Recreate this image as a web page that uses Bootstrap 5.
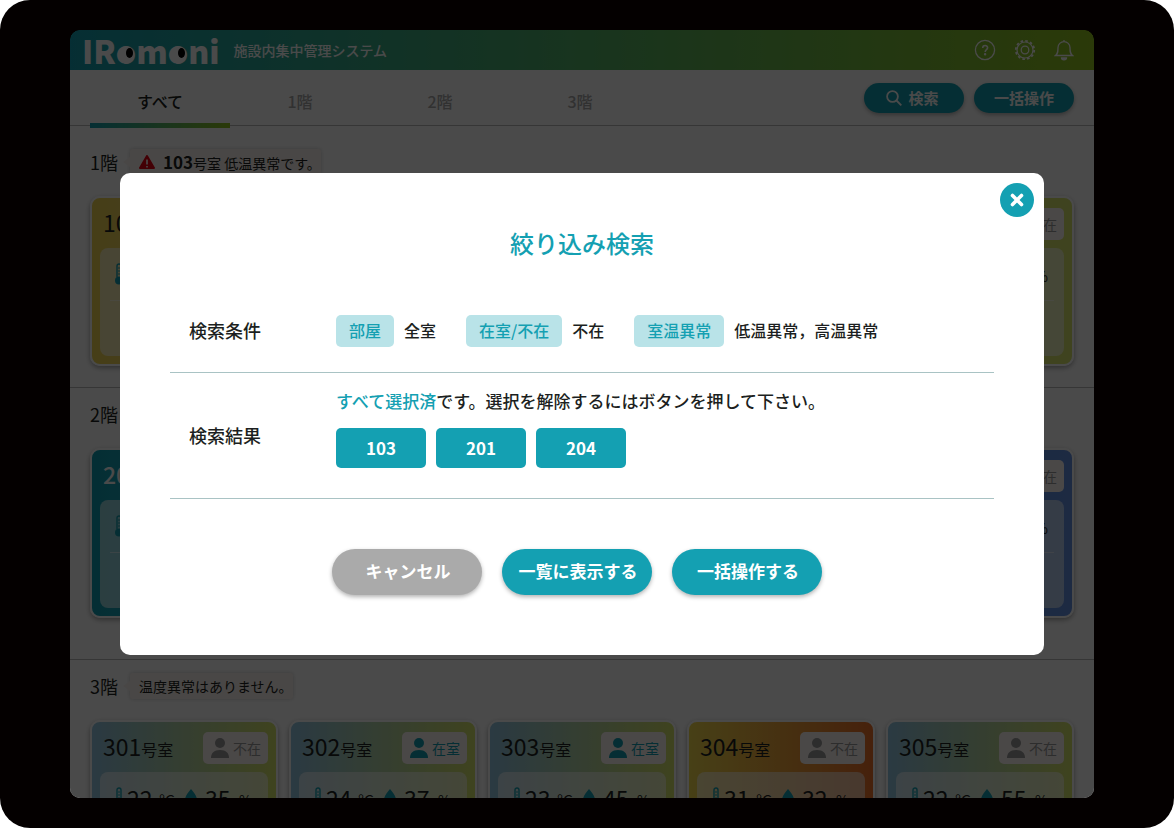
<!DOCTYPE html>
<html lang="ja">
<head>
<meta charset="utf-8">
<meta name="viewport" content="width=device-width, initial-scale=1">
<title>IRomoni 施設内集中管理システム</title>
<link href="https://cdn.jsdelivr.net/npm/bootstrap@5.3.0/dist/css/bootstrap.min.css" rel="stylesheet">
<style>
:root { --teal: #14a0b2; --line: #a9c3c4; --ink: #1c1f21; }
body { font-family: "Noto Sans CJK JP", sans-serif; color: var(--ink); background: #fff; }
.device { min-height: 100vh; padding: 30px 80px 30px 70px; background: #040000; border-radius: 30px; }
.screen { height: calc(100vh - 60px); border-radius: 10px; }
.tabs, .floor { background: #fff; }
.topbar { height: 40px; padding: 0 18px 0 12px; border-radius: 10px 10px 0 0; background: linear-gradient(90deg, var(--teal), #93c51f); color: #fff; }
.logo { font-size: 32px; line-height: 40px; font-weight: 900; color: #fff; }
.eye { position: relative; }
.eye::before { content: ""; position: absolute; left: 4px; right: 4px; top: 22px; height: 13px; border-radius: 50%; background: #fff; }
.eye::after { content: ""; position: absolute; right: 3px; top: 21px; width: 7px; height: 10px; border-radius: 50%; background: #000; }
.system-name { margin-left: 14px; font-size: 14px; font-weight: 500; }
.header-icons { gap: 18px; }
.icon-btn { width: 22px; height: 22px; color: #fff; }
.tabs { height: 56px; padding: 0 20px; border-bottom: 1px solid #bbb; }
.tabs .nav-link { position: relative; width: 140px; height: 56px; padding: 0; line-height: 62px; text-align: center; font-size: 16px; font-weight: 500; color: #aaa; }
.tabs .nav-link.active { color: var(--ink); }
.tabs .nav-link.active::after { content: ""; position: absolute; left: 0; right: 0; bottom: -2px; height: 5px; background: linear-gradient(90deg, var(--teal), #93c51f); }
.pill { border: 0; border-radius: 24px; background: var(--teal); color: #fff; font-weight: 700; box-shadow: 0 2px 4px rgba(0,0,0,.3); }
.pill-sm { width: 100px; height: 30px; font-size: 15px; line-height: 30px; padding: 0; }
.pill-search { gap: 6px; padding-right: 3px; }
.pill-lg { width: 150px; height: 46px; font-size: 17px; line-height: 42px; padding: 0 0 2px 2px; }
.pill-cancel { background: #aaa; }
.floor { padding: 0 20px 41px; border-bottom: 1px solid #bbb; }
.floor-first { padding-top: 10px; padding-bottom: 21px; }
.floor-head { height: 60px; padding-top: 12px; }
.floor-name { font-size: 18px; line-height: 28px; margin: 0; font-weight: 400; }
.bubble { position: relative; height: 26px; padding: 0 0 0 9px; margin: 1px 0 0 12px; border-radius: 3px; background: #fcf5f0; font-size: 14px; line-height: 26px; box-shadow: 0 0 4px rgba(0,0,0,.2); }
.bubble::before { content: ""; position: absolute; left: -7px; top: 8px; border: 5px solid transparent; border-left: 0; border-right: 7px solid #fcf5f0; }
.bubble b { font-size: 17px; }
.room { width: 188px; height: 170px; padding: 10px 8px 8px; border: 2px solid #fff; border-radius: 10px; box-shadow: 0 2px 5px rgba(0,0,0,.35); }
.room-name { font-size: 16px; line-height: 28px; margin: 0; padding-left: 3px; font-weight: 400; }
.room-name span { font-size: 23px; }
.presence { width: 65px; height: 32px; padding-left: 8px; gap: 4px; border-radius: 5px; background: #fff6f4; font-size: 14px; color: #9a9a9a; }
.presence.is-in { color: var(--teal); }
.readings { height: 108px; margin-top: 8px; padding: 0 10px; border-radius: 8px; background: rgba(255,255,255,.55); }
.reading-row { height: 53px; padding-left: 5px; border-bottom: 1px solid rgba(255,255,255,.5); font-size: 14px; }
.reading-row b { font-size: 23px; font-weight: 400; width: 26px; }
.unit-c { width: 32px; padding: 4px 0 0 6px; font-size: 16px; }
.ico-thermo, .ico-drop { color: var(--teal); }
.cool { background: linear-gradient(90deg, #93c6e4, #d8e66a); }
.hot { background: linear-gradient(90deg, #f4dc4e, #f0722a); }
.chilly { background: linear-gradient(90deg, #f0d650, #f0d890); }
.calm { background: linear-gradient(90deg, #93c6e4, #d8e66a 70%); }
.deep { background: linear-gradient(90deg, #0f9fb2, #49b6d0); }
.cold { background: linear-gradient(90deg, #4a9fd8, #6490e4); }
.deep .room-name { color: #fff; font-weight: 500; }
.veil { position: absolute; inset: 0; padding: 0 50px; background: rgba(0,0,0,.71); }
.panel { padding: 52px 50px 60px; border-radius: 10px; background: #fff; }
.panel-title { font-size: 24px; line-height: 36px; margin: 0 0 29px; font-weight: 500; color: var(--teal); }
.close-btn { position: absolute; top: 10px; right: 10px; width: 34px; height: 34px; border-radius: 50%; background: var(--teal); }
.criteria { border-bottom: 1px solid var(--line); font-size: 16px; font-weight: 500; }
.criteria-label { width: 166px; padding-left: 19px; margin: 0; font-size: 18px; font-weight: 500; }
.tag { height: 32px; padding: 0 13px; line-height: 30px; border-radius: 5px; background: #b9e3e8; color: var(--teal); }
.tag + span { line-height: 30px; margin-left: 10px; }
.conditions { gap: 30px; padding: 25px 0; }
.results { padding: 15px 0 30px; }
.results p { font-size: 17px; line-height: 26px; margin: 0 0 14px; }
.results em { font-style: normal; color: var(--teal); }
.room-btn { width: 90px; height: 40px; padding: 0; border: 0; border-radius: 5px; background: var(--teal); color: #fff; font-size: 17px; font-weight: 700; }
.gap-10 { gap: 10px; }
.actions { gap: 20px; padding: 50px 10px 0 0; }
</style>
</head>
<body>
<svg class="d-none">
  <symbol id="person" viewBox="0 0 18 20"><circle cx="9" cy="5" r="5"/><path d="M0 20c0-5 3-8 9-8s9 3 9 8z"/></symbol>
  <symbol id="thermo" viewBox="0 0 8 22"><path d="M2 14V3a2 2 0 0 1 4 0v11" fill="none" stroke="currentColor" stroke-width="1.4"/><circle cx="4" cy="17.5" r="4"/><path d="M3 5h2M3 8h2M3 11h2" stroke="currentColor"/></symbol>
  <symbol id="drop" viewBox="0 0 12 18"><path d="M6 0c3 4 6 7 6 11a6 6 0 0 1-12 0C0 7 3 4 6 0z"/></symbol>
</svg>
<div class="device">
<div class="screen position-relative overflow-hidden">
  <header class="topbar d-flex align-items-center">
    <a href="#" class="logo text-decoration-none" aria-label="IRomoni">IR<span class="eye">o</span>m<span class="eye">o</span>ni</a>
    <span class="system-name">施設内集中管理システム</span>
    <div class="header-icons ms-auto d-flex align-items-center">
      <button class="btn p-0 border-0 icon-btn d-flex" aria-label="ヘルプ"><svg width="22" height="22" fill="none" stroke="currentColor" stroke-width="1.3"><circle cx="11" cy="11" r="9.6"/><path d="M8.7 9c0-3.4 4.9-3.2 4.9-.3 0 1.9-2.4 2-2.4 4.2" stroke-width="1.6"/><circle cx="11.1" cy="15.3" r=".6" fill="currentColor"/></svg></button>
      <button class="btn p-0 border-0 icon-btn d-flex" aria-label="設定"><svg width="22" height="22" fill="none" stroke="currentColor"><circle cx="11" cy="11" r="8" stroke-width="1.2"/><circle cx="11" cy="11" r="9.2" stroke-width="1.8" stroke-dasharray="2.6 2.217"/><circle cx="11" cy="11" r="3.8" stroke-width="1.3"/></svg></button>
      <button class="btn p-0 border-0 icon-btn d-flex" aria-label="通知"><svg width="20" height="22" fill="none" stroke="currentColor" stroke-width="1.3"><path d="M1.5 16.5c2.5-2 2.5-4 2.5-8a6 5.8 0 0 1 12 0c0 4 0 6 2.5 8zM10 1v1.8"/><path d="M7.5 19a2.5 1.8 0 0 0 5 0z" fill="currentColor"/></svg></button>
    </div>
  </header>
  <nav class="tabs d-flex">
    <a href="#" class="nav-link active">すべて</a><a href="#" class="nav-link">1階</a><a href="#" class="nav-link">2階</a><a href="#" class="nav-link">3階</a>
    <div class="ms-auto d-flex gap-10 align-items-center">
      <button class="btn pill pill-sm pill-search d-flex align-items-center justify-content-center"><svg width="16" height="16" fill="none" stroke="currentColor" stroke-width="1.8"><circle cx="6.5" cy="6.500" r="5.400"/><path d="M10.500 10.500l4.800 4.800"/></svg>検索</button>
      <button class="btn pill pill-sm">一括操作</button>
    </div>
  </nav>
  <main>
    <section class="floor floor-first">
      <div class="floor-head d-flex">
        <h2 class="floor-name">1階</h2>
        <div class="bubble d-flex align-items-center"><svg width="16" height="14" class="me-2"><path d="M8 1l7 12H1z" fill="#e60012" stroke="#e60012" stroke-width="2" stroke-linejoin="round"/><path d="M8 4.5v5M8 11v1.6" stroke="#fff" stroke-width="1.6"/></svg><span><b>103</b>号室 低温異常です。</span></div>
      </div>
      <div class="d-flex justify-content-between" data-rooms="101,chilly,0,22,35|105,calm,0,22,55"></div>
    </section>
    <section class="floor">
      <div class="floor-head d-flex"><h2 class="floor-name">2階</h2></div>
      <div class="d-flex justify-content-between" data-rooms="201,deep,0,16,35|205,cold,0,17,55"></div>
    </section>
    <section class="floor">
      <div class="floor-head d-flex"><h2 class="floor-name">3階</h2><div class="bubble">温度異常はありません。</div></div>
      <div class="d-flex justify-content-between" data-rooms="301,cool,0,22,35|302,cool,1,24,37|303,cool,1,23,45|304,hot,0,31,32|305,cool,0,22,55"></div>
    </section>
  </main>

  <div class="veil d-flex flex-column justify-content-center">
    <div class="panel position-relative" role="dialog" aria-modal="true" aria-labelledby="dialog-title">
      <button class="btn close-btn p-0 border-0 d-flex align-items-center justify-content-center" aria-label="閉じる"><svg width="14" height="14" stroke="#fff" stroke-width="3.6" stroke-linecap="round"><path d="M2.5 2.5l9 9M11.5 2.5l-9 9"/></svg></button>
      <h1 class="panel-title text-center" id="dialog-title">絞り込み検索</h1>
      <div class="criteria d-flex align-items-center">
        <h2 class="criteria-label flex-shrink-0">検索条件</h2>
        <div class="conditions d-flex">
          <div class="d-flex"><span class="tag">部屋</span><span>全室</span></div>
          <div class="d-flex"><span class="tag">在室/不在</span><span>不在</span></div>
          <div class="d-flex"><span class="tag">室温異常</span><span>低温異常，高温異常</span></div>
        </div>
      </div>
      <div class="criteria d-flex align-items-center">
        <h2 class="criteria-label flex-shrink-0">検索結果</h2>
        <div class="results">
          <p><em>すべて選択済</em>です。選択を解除するにはボタンを押して下さい。</p>
          <div class="d-flex gap-10">
            <button class="btn room-btn">103</button><button class="btn room-btn">201</button><button class="btn room-btn">204</button>
          </div>
        </div>
      </div>
      <div class="actions d-flex justify-content-center">
        <button class="btn pill pill-lg pill-cancel">キャンセル</button>
        <button class="btn pill pill-lg">一覧に表示する</button>
        <button class="btn pill pill-lg">一括操作する</button>
      </div>
    </div>
  </div>
</div>
</div>
<script src="https://cdn.jsdelivr.net/npm/bootstrap@5.3.0/dist/js/bootstrap.bundle.min.js"></script>
<script>
document.querySelectorAll('[data-rooms]').forEach(function (list) {
  list.innerHTML = list.dataset.rooms.split('|').map(function (entry) {
    var r = entry.split(','), inside = r[2] === '1';
    return '<article class="room ' + r[1] + '">' +
      '<div class="d-flex justify-content-between"><h3 class="room-name"><span>' + r[0] + '</span>号室</h3>' +
      '<div class="presence d-flex align-items-center ' + (inside ? 'is-in' : '') + '"><svg width="18" height="20" fill="currentColor"><use href="#person"/></svg>' + (inside ? '在室' : '不在') + '</div></div>' +
      '<div class="readings"><div class="reading-row d-flex align-items-center">' +
      '<svg class="ico-thermo me-1" width="8" height="22" fill="currentColor"><use href="#thermo"/></svg><b>' + r[3] + '</b><span class="unit-c">℃</span>' +
      '<svg class="ico-drop me-2" width="12" height="18" fill="currentColor"><use href="#drop"/></svg><b>' + r[4] + '</b><span class="ms-2 pt-1">%</span>' +
      '</div></div></article>';
  }).join('');
});
</script>
</body>
</html>
